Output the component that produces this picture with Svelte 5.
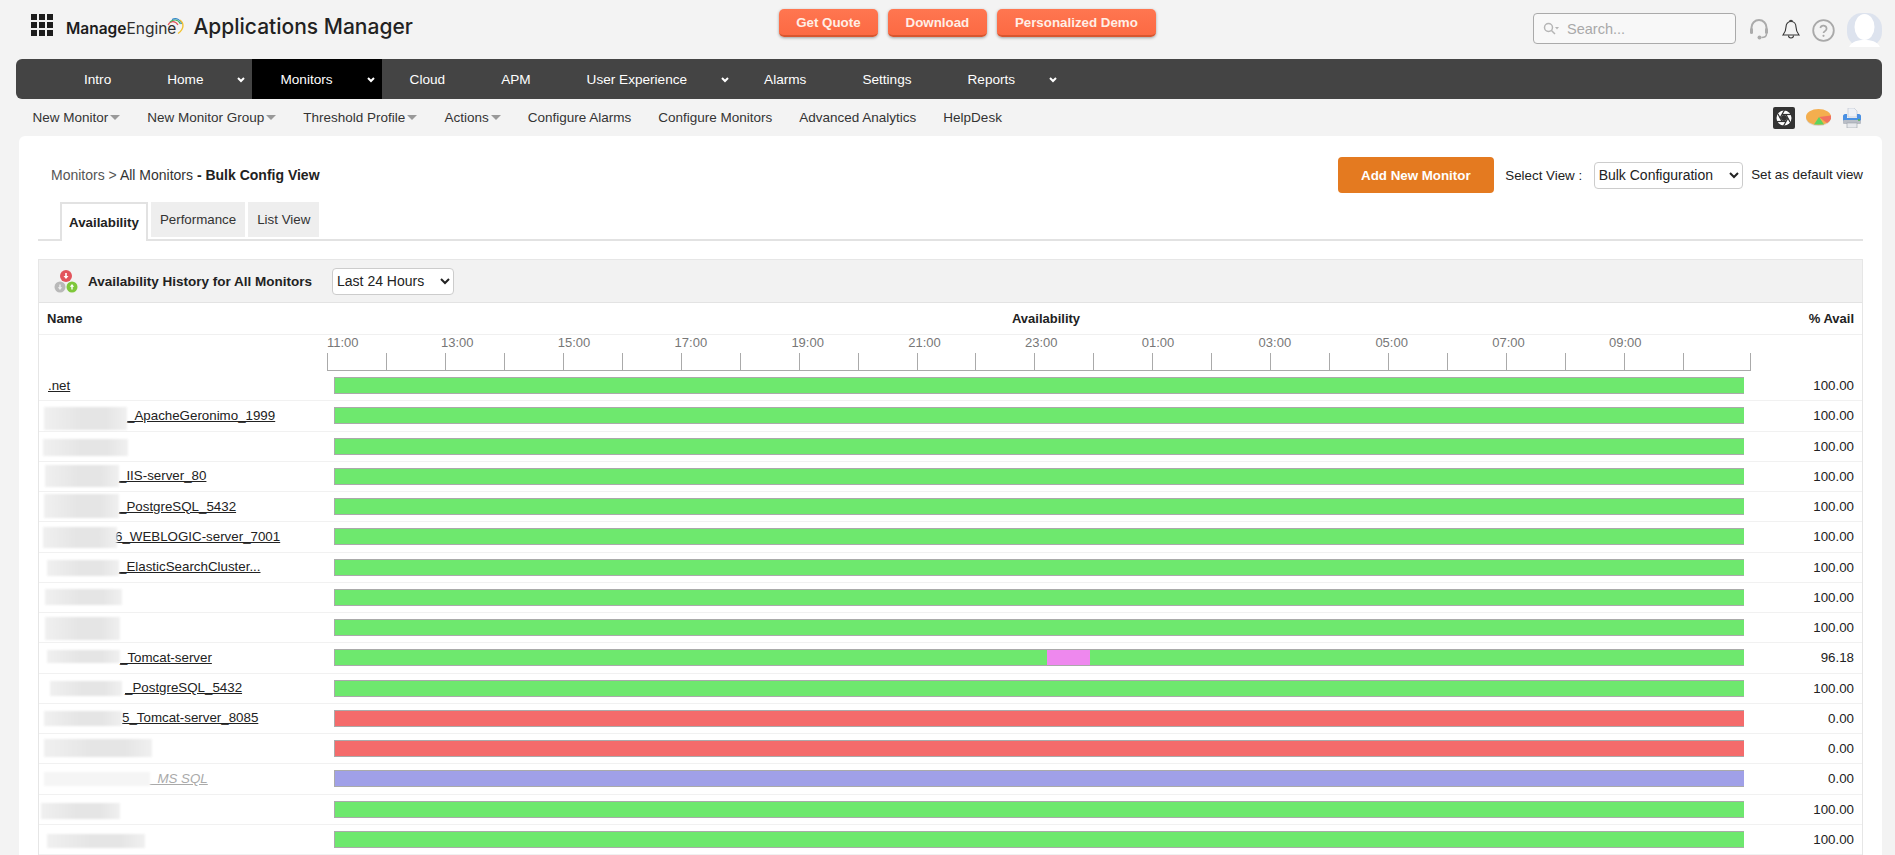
<script lang="ts">
  const navItems = [
    { label: 'Intro' },
    { label: 'Home', menu: true },
    { label: 'Monitors', menu: true, active: true },
    { label: 'Cloud' },
    { label: 'APM' },
    { label: 'User Experience', menu: true },
    { label: 'Alarms' },
    { label: 'Settings' },
    { label: 'Reports', menu: true }
  ];

  const subItems = [
    { label: 'New Monitor', menu: true },
    { label: 'New Monitor Group', menu: true },
    { label: 'Threshold Profile', menu: true },
    { label: 'Actions', menu: true },
    { label: 'Configure Alarms' },
    { label: 'Configure Monitors' },
    { label: 'Advanced Analytics' },
    { label: 'HelpDesk' }
  ];

  const hours = ['11:00', '13:00', '15:00', '17:00', '19:00', '21:00', '23:00', '01:00', '03:00', '05:00', '07:00', '09:00'];
  const ticks = Array.from({ length: 24 });

  const up = [{ state: 'up', pct: 100 }];
  const down = [{ state: 'down', pct: 100 }];
  const unknown = [{ state: 'unknown', pct: 100 }];

  // smudge = the blurred-out part of the monitor name, relative to its row
  const rows = [
    { text: '.net', indent: 9, bars: up, avail: '100.00' },
    { text: '_ApacheGeronimo_1999', indent: 88, smudge: [5, 83, 6, 23], bars: up, avail: '100.00' },
    { smudge: [4, 85, 7, 17], bars: up, avail: '100.00' },
    { text: '_IIS-server_80', indent: 80, smudge: [6, 74, 3, 22], bars: up, avail: '100.00' },
    { text: '_PostgreSQL_5432', indent: 80, smudge: [5, 75, 2, 24], bars: up, avail: '100.00' },
    { text: '6_WEBLOGIC-server_7001', indent: 76, smudge: [4, 74, 5, 21], bars: up, avail: '100.00' },
    { text: '_ElasticSearchCluster...', indent: 80, smudge: [8, 72, 7, 16], bars: up, avail: '100.00' },
    { smudge: [6, 77, 6, 16], bars: up, avail: '100.00' },
    { smudge: [6, 75, 4, 23], bars: up, avail: '100.00' },
    {
      text: '_Tomcat-server',
      indent: 81,
      smudge: [8, 73, 7, 13],
      bars: [
        { state: 'up', pct: 50.5 },
        { state: 'pending', pct: 3.07 },
        { state: 'up', pct: 46.43 }
      ],
      avail: '96.18'
    },
    { text: '_PostgreSQL_5432', indent: 86, smudge: [11, 72, 7, 15], bars: up, avail: '100.00' },
    { text: '5_Tomcat-server_8085', indent: 83, smudge: [5, 78, 7, 15], bars: down, avail: '0.00' },
    { smudge: [5, 108, 5, 18], bars: down, avail: '0.00' },
    { text: '_MS SQL', indent: 111, smudge: [5, 106, 8, 14], faint: true, bars: unknown, avail: '0.00' },
    { smudge: [2, 79, 8, 16], bars: up, avail: '100.00' },
    { smudge: [8, 98, 9, 14], bars: up, avail: '100.00' }
  ];
</script>

<div class="page">
  <header class="topbar">
    <div class="apps-grid">
      {#each Array(9) as _}<span></span>{/each}
    </div>
    <div class="brand">
      <span class="me"><b>Manage</b>Engine</span>
      <svg class="me-arc" width="18" height="18" viewBox="0 0 18 18" fill="none" stroke-width="1.1">
        <path d="M1 8C3 4 8 3 11 8" stroke="#e0505a"/>
        <path d="M3 5C6 2 11 2 13.5 7" stroke="#3fae5a"/>
        <path d="M5 2.5C9 .6 13.5 2 15 7" stroke="#2f86c8"/>
        <path d="M13 3C17 6 17.500 12 11 16.500" stroke="#f2c230" stroke-width="1.4"/>
      </svg>
      <span class="product">Applications Manager</span>
    </div>
    <div class="cta">
      <button>Get Quote</button>
      <button>Download</button>
      <button class="demo">Personalized Demo</button>
    </div>
    <div class="tools">
      <div class="search">
        <svg width="16" height="14" viewBox="0 0 16 14" fill="none" stroke="#b5b5b5" stroke-width="1.500">
          <circle cx="5.500" cy="5.500" r="4"/>
          <line x1="8.500" y1="8.500" x2="12" y2="12"/>
          <path d="M12 5h4l-2 2.500z" fill="#b5b5b5" stroke="none"/>
        </svg>
        <span>Search...</span>
      </div>
      <svg class="headset" width="20" height="22" viewBox="0 0 20 22" fill="none" stroke="#ababab" stroke-width="2">
        <path d="M2.500 13V9.500a7.500 7.500 0 0 1 15 0V13"/>
        <rect x="1" y="10" width="3" height="6" rx="1.500" fill="#ababab" stroke="none"/>
        <rect x="16" y="10" width="3" height="6" rx="1.500" fill="#ababab" stroke="none"/>
        <path d="M17.500 16c0 2.500-2 3.500-5 3.500" stroke-width="1.500"/>
        <circle cx="10.500" cy="19.500" r="2" fill="#ababab" stroke="none"/>
      </svg>
      <svg class="bell" width="18" height="21" viewBox="0 0 18 21" fill="none" stroke="#333" stroke-width="1.100">
        <path d="M9 2.500c-3.200 0-5 2.500-5 5.500 0 4-1 5.500-3 8h16c-2-2.500-3-4-3-8 0-3-1.800-5.500-5-5.500z"/>
        <path d="M7.500 2.700a1.500 1.500 0 0 1 3 0"/>
        <path d="M6.500 16.500a2.500 2.500 0 0 0 5 0"/>
      </svg>
      <svg class="help" width="23" height="23" viewBox="0 0 23 23" fill="none" stroke="#a9a9a9" stroke-width="1.800">
        <circle cx="11.500" cy="11.500" r="10.300"/>
        <path d="M8.300 9a3.200 3.200 0 0 1 6.300.8c0 2.100-3.100 2.400-3.100 4.300" stroke-width="1.700"/>
        <circle cx="11.500" cy="16.800" r="1.100" fill="#a9a9a9" stroke="none"/>
      </svg>
      <svg class="avatar" width="35" height="34" viewBox="0 0 35 34">
        <rect width="35" height="34" rx="15" fill="#dde3ee"/>
        <ellipse cx="17.500" cy="14" rx="10" ry="13" fill="#fff"/>
        <path d="M2 34c3-6 9-7 15.500-7S30 28 33 34z" fill="#fff"/>
      </svg>
    </div>
  </header>

  <nav class="mainnav">
    {#each navItems as item}
      <a class="nav-item" class:active={item.active} class:menu={item.menu} href="#top">
        {item.label}
        {#if item.menu}
          <svg class="chev" width="8" height="6" viewBox="0 0 8 6" fill="none" stroke="#fff" stroke-width="2"><path d="M1 1l3 3 3-3"/></svg>
        {/if}
      </a>
    {/each}
  </nav>

  <div class="subnav">
    {#each subItems as item}
      <a href="#top">{item.label}{#if item.menu}<i class="caret"></i>{/if}</a>
    {/each}
    <div class="sub-icons">
      <svg width="22" height="22" viewBox="0 0 22 22">
        <rect width="22" height="22" rx="2" fill="#333"/>
        <circle cx="11" cy="11" r="7.500" fill="#fff"/>
        <g stroke="#333" stroke-width="1.200">
          <line x1="13" y1="7.500" x2="17" y2="15"/>
          <line x1="9" y1="7.500" x2="18" y2="7.500"/>
          <line x1="7" y1="11" x2="11.500" y2="3"/>
          <line x1="9" y1="14.500" x2="5" y2="7"/>
          <line x1="13" y1="14.500" x2="4" y2="14.500"/>
          <line x1="15" y1="11" x2="10.500" y2="19"/>
        </g>
        <circle cx="11" cy="11" r="3" fill="#333"/>
      </svg>
      <svg class="pie" width="25" height="17" viewBox="0 0 25 17">
        <ellipse cx="12.500" cy="9" rx="12.500" ry="8" fill="#d9d4cc"/>
        <ellipse cx="12.500" cy="8" rx="12.500" ry="8" fill="#f4ae4e"/>
        <path d="M13 8L25 6.500A12.500 8 0 0 1 21 14z" fill="#f2715e"/>
        <path d="M13 8L8 15.500H18z" fill="#5ed35e"/>
      </svg>
      <svg width="20" height="20" viewBox="0 0 20 20">
        <path d="M6 0h6l3 3v6H6z" fill="#eef1f5" stroke="#b8c0cc" stroke-width=".6"/>
        <path d="M1 8c0-1 1-2 2-2h2v4h10V6h2c1 0 2 1 2 2v6H1z" fill="#4a90e2"/>
        <rect x="1" y="12" width="18" height="4" rx="1" fill="#b9bec6"/>
        <rect x="5" y="15" width="10" height="5" fill="#e6e8ec" stroke="#9aa0a8" stroke-width=".6"/>
        <circle cx="17" cy="12" r="1" fill="#4fb548"/>
      </svg>
    </div>
  </div>

  <main class="card">
    <div class="title-row">
      <div class="crumbs">
        <a class="first" href="#top">Monitors</a> &gt; <a href="#top">All Monitors</a> <b>- Bulk Config View</b>
      </div>
      <button class="add-btn">Add New Monitor</button>
      <span class="view-label">Select View :</span>
      <select class="view-select">
        <option>Bulk Configuration</option>
      </select>
      <span class="default-link">Set as default view</span>
    </div>

    <div class="tabs">
      <span class="tab current">Availability</span>
      <span class="tab">Performance</span>
      <span class="tab">List View</span>
    </div>

    <section class="panel">
      <div class="panel-head">
        <svg width="24" height="23" viewBox="0 0 24 23">
          <circle cx="12" cy="6" r="6" fill="#e2545c"/>
          <circle cx="6" cy="17" r="5.500" fill="#b9b9b9"/>
          <circle cx="18" cy="17" r="5.500" fill="#7ec73a"/>
          <path d="M12 9L9.500 6h1.700V3h1.600v3h1.700z" fill="#fff"/>
          <path d="M6 20l-2.200-2.700h1.500V14.500h1.400v2.800h1.500z" fill="#eee"/>
          <path d="M18 14l2.200 2.700h-1.500v2.800h-1.400v-2.800h-1.500z" fill="#fff"/>
        </svg>
        <strong>Availability History for All Monitors</strong>
        <select class="range-select">
          <option>Last 24 Hours</option>
        </select>
      </div>

      <div class="grid-row head">
        <div class="name">Name</div>
        <div class="chart-title">Availability</div>
        <div class="avail">% Avail</div>
      </div>

      <div class="grid-row axis">
        <div></div>
        <div class="axis-cell">
          <div class="hours">
            {#each hours as h}<span>{h}</span>{/each}
          </div>
          <div class="ticks">
            {#each ticks as _}<i></i>{/each}
          </div>
        </div>
        <div></div>
      </div>

      {#each rows as row}
        <div class="grid-row mon">
          <div class="name" style={`padding-left:${row.indent ?? 0}px`}>
            {#if row.smudge}
              <span class="smudge" class:light={row.faint} style={`left:${row.smudge[0]}px;width:${row.smudge[1]}px;top:${row.smudge[2]}px;height:${row.smudge[3]}px`}></span>
            {/if}
            {#if row.text}
              <a class:faint={row.faint} href="#top">{row.text}</a>
            {/if}
          </div>
          <div class="bar-cell">
            <div class="bar">
              {#each row.bars as seg}
                <span class={seg.state} style={`width:${seg.pct}%`}></span>
              {/each}
            </div>
          </div>
          <div class="avail">{row.avail}</div>
        </div>
      {/each}
    </section>
  </main>
</div>

<style>
  :global(body) {
    margin: 0;
    background: #f3f3f3;
    overflow: hidden;
    font-family: 'Liberation Sans', Arial, sans-serif;
    font-size: 13.33px;
    color: #222;
  }

  a {
    color: inherit;
    text-decoration: none;
  }

  .page {
    height: 855px;
    overflow: hidden;
  }

  .topbar {
    display: flex;
    align-items: flex-start;
    height: 59px;
    padding: 0 13px 0 31px;
    box-sizing: border-box;
  }

  .apps-grid {
    display: grid;
    grid-template-columns: repeat(3, 6px);
    grid-auto-rows: 6px;
    gap: 2px;
    margin-top: 14px;
  }

  .apps-grid span {
    background: #1d1d1d;
  }

  .brand {
    display: flex;
    align-items: center;
    margin: 12px 0 0 13px;
    height: 28px;
  }

  .me {
    font-family: Inter, 'Noto Sans', sans-serif;
    font-size: 15.500px;
    color: #2e2e2e;
    margin-top: 4px;
  }

  .me b {
    font-weight: 600;
    color: #1c1c1c;
  }

  .me-arc {
    margin: 0 8px 0 -9px;
    flex: none;
  }

  .product {
    font-family: Inter, 'Noto Sans', sans-serif;
    font-size: 21px;
    font-weight: 500;
    color: #222;
  }

  .cta {
    display: flex;
    gap: 10px;
    margin: 9px 0 0 366px;
  }

  .cta button {
    width: 99px;
    height: 28px;
    padding: 0;
    border: 0;
    border-bottom: 2px solid #d8562f;
    border-radius: 5px;
    background: linear-gradient(#ff7650, #fc6a43);
    box-shadow: 0 1px 3px rgba(0, 0, 0, 0.35);
    color: #ffeee6;
    font: bold 13.33px 'Liberation Sans', Arial, sans-serif;
  }

  .cta .demo {
    width: 159px;
  }

  .tools {
    display: flex;
    align-items: flex-start;
    margin-left: auto;
    padding-top: 13px;
  }

  .search {
    display: flex;
    align-items: center;
    gap: 8px;
    width: 203px;
    height: 31px;
    box-sizing: border-box;
    padding-left: 9px;
    border: 1px solid #aaa;
    border-radius: 4px;
    background: #f8f8f8;
    color: #a9a9a9;
    font-size: 14.500px;
  }

  .headset {
    margin: 5px 0 0 13px;
  }

  .bell {
    margin: 6px 0 0 13px;
  }

  .help {
    margin: 6px 0 0 12px;
  }

  .avatar {
    margin-left: 12px;
  }

  .mainnav {
    display: flex;
    height: 40px;
    margin: 0 13px 0 16px;
    padding-left: 40px;
    border-radius: 6px;
    background: #444;
  }

  .nav-item {
    display: flex;
    align-items: center;
    position: relative;
    padding: 0 28px;
    color: #fff;
    font-size: 13.600px;
  }

  .nav-item.menu {
    padding-right: 49px;
  }

  .nav-item.active {
    background: #000;
  }

  .chev {
    position: absolute;
    right: 7px;
    top: 18px;
  }

  .subnav {
    display: flex;
    align-items: center;
    gap: 27px;
    height: 37px;
    padding: 0 13px 0 32.500px;
    color: #333;
    font-size: 13.500px;
  }

  .caret {
    display: inline-block;
    margin-left: 2px;
    vertical-align: 2px;
    border: 5px solid transparent;
    border-top-color: #999;
    border-bottom: 0;
  }

  .sub-icons {
    display: flex;
    align-items: center;
    gap: 11px;
    margin-left: auto;
    padding-right: 20px;
  }

  .card {
    margin: 0 13px 0 19px;
    padding: 21px 19px 0;
    background: #fff;
    border-radius: 6px 6px 0 0;
    height: 719px;
    box-sizing: border-box;
  }

  .title-row {
    display: flex;
    align-items: center;
    height: 36px;
  }

  .crumbs {
    margin: 0 auto 0 13px;
    font-size: 14px;
    color: #555;
  }

  .crumbs a:not(.first) {
    color: #333;
  }

  .crumbs b {
    color: #222;
  }

  .add-btn {
    width: 156px;
    height: 36px;
    border: 0;
    border-radius: 4px;
    background: #e47a20;
    color: #fff;
    font: bold 13.33px 'Liberation Sans', Arial, sans-serif;
  }

  .view-label {
    margin-left: 11.500px;
    font-size: 13.33px;
  }

  .view-select {
    width: 149px;
    height: 27px;
    margin-left: 11.500px;
    border: 1px solid #ccc;
    border-radius: 4px;
    background: #fff;
    color: #222;
    font: 14px 'Liberation Sans', Arial, sans-serif;
  }

  .default-link {
    margin: 0 0 2px 8.500px;
    white-space: nowrap;
    font-size: 13.33px;
  }

  .tabs {
    display: flex;
    align-items: flex-end;
    gap: 3px;
    height: 39px;
    margin-top: 7px;
    padding-left: 22px;
    border-bottom: 2px solid #e2e2e2;
  }

  .tab {
    display: flex;
    align-items: center;
    height: 35px;
    margin-bottom: 2px;
    padding: 0 9px;
    background: #eee;
    font-size: 13.33px;
    color: #333;
  }

  .tab.current {
    height: 39px;
    margin-bottom: -2px;
    border: 2px solid #e2e2e2;
    border-bottom: 0;
    box-sizing: border-box;
    padding: 0 7px;
    background: #fff;
    font-weight: bold;
    color: #222;
  }

  .panel {
    margin-top: 18px;
    border: 1px solid #e6e6e6;
    border-bottom: 0;
  }

  .panel-head {
    display: flex;
    align-items: center;
    height: 43px;
    padding-left: 15px;
    background: #f2f2f2;
    border-bottom: 1px solid #e3e3e3;
    box-sizing: border-box;
  }

  .panel-head strong {
    margin-left: 10px;
    font-size: 13.500px;
  }

  .range-select {
    width: 122px;
    height: 27px;
    margin-left: 20px;
    border: 1px solid #ccc;
    border-radius: 4px;
    background: #fff;
    color: #222;
    font: 14px 'Liberation Sans', Arial, sans-serif;
  }

  .grid-row {
    display: grid;
    grid-template-columns: 288px 1424px 1fr;
  }

  .grid-row .avail {
    text-align: right;
    padding-right: 8px;
  }

  .head {
    align-items: center;
    height: 32px;
    border-bottom: 1px solid #f0f0f0;
    box-sizing: border-box;
    font-weight: bold;
    font-size: 13px;
  }

  .head .name {
    padding-left: 8px;
  }

  .chart-title {
    text-align: center;
    padding-left: 14px;
  }

  .axis {
    height: 36px;
  }

  .axis-cell {
    display: flex;
    flex-direction: column;
    justify-content: flex-end;
  }

  .hours {
    display: flex;
    color: #777;
    font-size: 13px;
    line-height: 16px;
  }

  .hours span {
    width: 116.800px;
  }

  .hours span:first-child {
    width: 114px;
  }

  .ticks {
    display: flex;
    height: 18px;
    margin-top: 2px;
    border-bottom: 1px solid #aaa;
    border-right: 1px solid #aaa;
    width: 1424px;
    box-sizing: border-box;
  }

  .ticks i {
    width: 58.960px;
    border-left: 1px solid #aaa;
    box-sizing: border-box;
  }

  .ticks i:last-child {
    width: 66px;
  }

  .mon {
    height: 30.250px;
    box-sizing: border-box;
    border-bottom: 1px solid #f1f1f1;
    align-items: center;
  }

  .mon .name {
    position: relative;
    align-self: stretch;
    display: flex;
    align-items: center;
  }

  .mon .name a {
    color: #222;
    text-decoration: underline;
    margin-top: -1px;
  }

  .mon .name a.faint {
    color: #aaa;
    font-style: italic;
  }

  .smudge {
    position: absolute;
    background: linear-gradient(90deg, #f0f0f0, #e5e5e5 45%, #e5e5e5 75%, #f0f0f0);
    filter: blur(1px);
  }

  .smudge.light {
    background: #f5f5f5;
  }

  .bar-cell {
    padding: 0 7px 0 7px;
  }

  .bar {
    display: flex;
    width: 1410px;
    height: 17px;
    box-sizing: border-box;
    border: 1px solid #aaa;
    border-right: 0;
    border-left-width: 1.500px;
  }

  .bar span {
    height: 100%;
  }

  .bar .up {
    background: #6ee86e;
  }

  .bar .pending {
    background: #ee88ee;
  }

  .bar .down {
    background: #f46b6b;
  }

  .bar .unknown {
    background: #a0a0e8;
  }
</style>
